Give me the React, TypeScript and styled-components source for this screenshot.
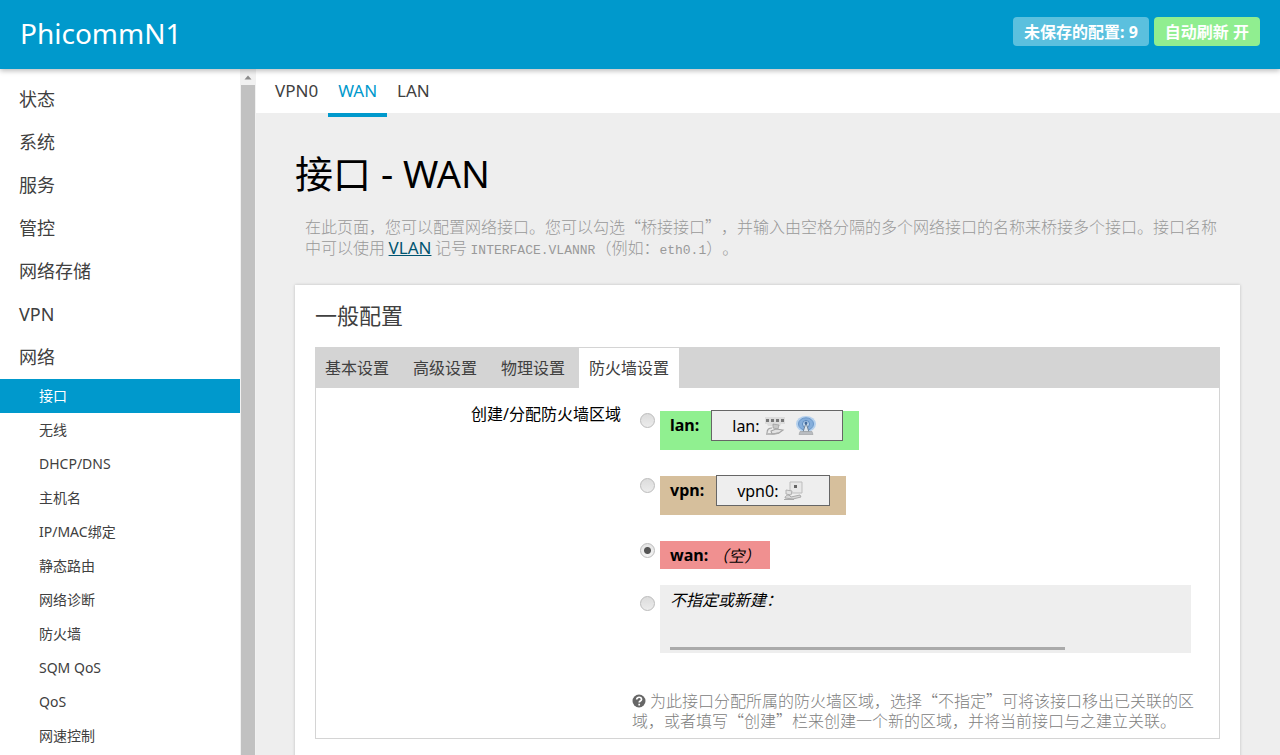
import React, { useState } from "react";
import styled, { createGlobalStyle, css } from "styled-components";

const latin = '"Noto Sans", "Noto Sans CJK SC", sans-serif';
const han = '"Noto Sans CJK SC", "Noto Sans", sans-serif';

const GlobalStyle = createGlobalStyle`
  *, *::before, *::after { box-sizing: border-box; }
  html, body, #root { height: 100%; }
  body {
    margin: 0;
    background: #eee;
    color: #404040;
    font-family: ${latin};
    font-size: 16px;
    line-height: 24px;
    text-spacing-trim: space-all;
  }
  ul { list-style: none; margin: 0; padding: 0; }
  a { text-decoration: none; }
`;

const Shell = styled.div`
  display: flex;
  flex-direction: column;
  height: 100vh;
`;

const Header = styled.header`
  position: relative;
  z-index: 2;
  flex: none;
  display: flex;
  align-items: flex-start;
  justify-content: space-between;
  height: 69px;
  padding: 17px 20px 0;
  background: #0099cc;
  box-shadow: 0 2px 5px rgba(0, 0, 0, 0.26);
`;

const Brand = styled.a`
  color: #fff;
  font-size: 28px;
  line-height: 32px;
`;

const Badges = styled.div`
  display: flex;
  gap: 5px;
`;

const badge = css`
  height: 29px;
  padding: 0 11px;
  border: 0;
  border-radius: 4px;
  color: #fff;
  font: bold 16px/31px ${latin};
  white-space: nowrap;
`;

const ChangesLink = styled.a`
  ${badge}
  background: #5bc0de;
`;

const RefreshButton = styled.button`
  ${badge}
  background: #90ee90;
  cursor: pointer;
`;

const Body = styled.div`
  flex: 1;
  min-height: 0;
  display: flex;
`;

const Sidebar = styled.nav`
  flex: none;
  width: 240px;
  padding-top: 9px;
  background: #fff;
  overflow-y: auto;
  scrollbar-width: none;
`;

const MenuLink = styled.a`
  display: block;
  padding: 0 19px;
  color: #404040;
  font-size: 18px;
  line-height: 43px;
`;

const SubLink = styled.a<{ $active?: boolean }>`
  display: block;
  padding: 0 39px;
  color: ${(p) => (p.$active ? "#fff" : "#404040")};
  background: ${(p) => (p.$active ? "#0099cc" : "transparent")};
  font-size: 14px;
  line-height: 34px;
`;

const Rail = styled.div`
  flex: none;
  display: flex;
  flex-direction: column;
  width: 16px;
  padding: 0 1px;
  background: #f1f1f1;
`;

const RailArrow = styled.svg`
  flex: none;
  width: 14px;
  height: 16px;
`;

const RailThumb = styled.div`
  flex: 1;
  background: #c1c1c1;
`;

const Main = styled.main`
  flex: 1;
  min-width: 0;
  overflow-y: auto;
  scrollbar-width: none;
`;

const PageTabs = styled.ul`
  display: flex;
  height: 44px;
  padding-left: 9px;
  background: #fff;
`;

const PageTab = styled.a<{ $active?: boolean }>`
  display: block;
  height: 48px;
  padding: 0 10px;
  border-bottom: 4px solid ${(p) => (p.$active ? "#0099cc" : "transparent")};
  color: ${(p) => (p.$active ? "#0099cc" : "#404040")};
  font-size: 17px;
  line-height: 44px;
`;

const Content = styled.div`
  padding: 34px 40px 40px 39px;
`;

const Title = styled.h2`
  margin: 0;
  color: #000;
  font-size: 38px;
  font-weight: 400;
  line-height: 52px;
`;

const Intro = styled.p`
  margin: 17px 0 27px;
  padding: 0 10px;
  color: #999;
  font-family: ${han};
  font-weight: 300;
  line-height: 21px;
`;

const TermLink = styled.a`
  color: #005470;
  font-family: ${latin};
  font-size: 17px;
  font-weight: 400;
  line-height: 20px;
  text-decoration: underline;
`;

const Code = styled.code`
  font: 13px/1 "Liberation Mono", monospace;
`;

const Card = styled.section`
  padding: 18px 20px 20px;
  background: #fff;
  box-shadow: 0 0 3px rgba(0, 0, 0, 0.2);
`;

const CardTitle = styled.h3`
  margin: 0 0 20px;
  font-size: 22px;
  font-weight: 400;
  line-height: 24px;
`;

const SettingTabs = styled.div`
  display: flex;
  gap: 4px;
  height: 41px;
  padding-top: 1px;
  background: #d4d4d4;
`;

const SettingTab = styled.button<{ $active?: boolean }>`
  padding: 0 10px;
  border: 0;
  background: ${(p) => (p.$active ? "#fff" : "transparent")};
  color: #404040;
  font: 16px/40px ${latin};
  cursor: pointer;
`;

const Panel = styled.form`
  display: grid;
  grid-template-columns: minmax(160px, 305px) 1fr;
  column-gap: 11px;
  padding: 14px 19px 8px 0;
  border: 1px solid #d4d4d4;
  border-top: 0;
`;

const FieldName = styled.div`
  color: #000;
  text-align: right;
`;

const ZoneList = styled.ul`
  padding: 9px 9px 0 8px;
  color: #000;
`;

const ZoneRow = styled.li<{ $roomy?: boolean }>`
  display: flex;
  align-items: flex-start;
  gap: 5px;
  margin-bottom: ${(p) => (p.$roomy ? 26 : 16)}px;
  &:last-child { margin-bottom: 0; }
`;

const Radio = styled.input<{ $low?: boolean }>`
  appearance: none;
  flex: none;
  width: 15px;
  height: 15px;
  margin: ${(p) => (p.$low ? 11 : 2)}px 0 0;
  border: 1px solid #bbb;
  border-radius: 50%;
  background: linear-gradient(#dcdcdc, #ececec);
  &:checked {
    background: radial-gradient(circle, #555 0 3px, transparent 4px), linear-gradient(#e4e4e4, #f4f4f4);
  }
`;

const Zone = styled.label<{ $color: string; $tall?: boolean }>`
  display: flex;
  align-items: flex-start;
  height: ${(p) => (p.$tall ? 39 : 28)}px;
  padding: 0 ${(p) => (p.$tall ? 16 : 10)}px 0 10px;
  background: ${(p) => p.$color};
  line-height: 28px;
`;

const Empty = styled.em`
  margin-left: 4px;
  font-family: ${han};
`;

const Network = styled.span`
  display: flex;
  align-items: center;
  height: 31px;
  margin: -1px 0 0 12px;
  padding: 0 26px 0 20px;
  border: 1px solid #666;
  background: #eee;
`;

const Icon = styled.svg`
  width: 20px;
  height: 20px;
  margin-left: 5px;
  & + & { margin-left: 11px; }
`;

const NewZone = styled.div`
  flex: 1;
  height: 68px;
  padding: 3px 10px;
  background: #eee;
`;

const NewZoneLabel = styled.label`
  display: block;
  font-style: italic;
`;

const NewZoneInput = styled.input`
  display: block;
  width: 100%;
  max-width: 395px;
  height: 38px;
  padding: 0;
  border: 0;
  border-bottom: 3px solid #aaa;
  background: transparent;
  font: 16px/24px ${latin};
  outline: none;
`;

const Help = styled.p`
  margin: 37px 0 0;
  color: #808080;
  font-family: ${han};
  font-weight: 300;
  line-height: 20px;
`;

const HelpIcon = styled.svg`
  width: 14px;
  height: 14px;
  margin-right: 4px;
  vertical-align: -1px;
`;

const SwitchIcon = () => (
  <Icon viewBox="0 0 20 20" aria-hidden="true">
    <path d="M0 1h20v7h-4l-1 2H3l-1-2H0z" fill="#dcdcdc" />
    <path d="M1 3h3v3H1zM6 3h3v3H6zM11 3h3v3h-3zM16 3h3v3h-3z" fill="#777" />
    <path d="M8 8l6 1-1 4-5-1z" fill="#c8c8c8" stroke="#999" strokeWidth="0.7" />
    <path d="M2 17c0-4 2-5 5-5M6 15l5-2 7 1-4 3-7 1z" fill="#e2e2e2" stroke="#a3a3a3" strokeWidth="1.1" />
    <path d="M1 18h8l5-1" fill="none" stroke="#aaa" strokeWidth="1.4" />
  </Icon>
);

const WifiIcon = () => (
  <Icon viewBox="0 0 20 20" aria-hidden="true">
    <ellipse cx="10" cy="8" rx="10" ry="8" fill="#b4d0ed" />
    <ellipse cx="10" cy="8" rx="7.500" ry="6.200" fill="#85aedb" stroke="#6b98ca" />
    <circle cx="10" cy="8" r="3.500" fill="#c5dcf3" stroke="#5785bb" />
    <path d="M10 7l-3 9h6z" fill="#dde5ec" stroke="#6c7f94" strokeWidth="0.9" />
    <circle cx="10" cy="7" r="1.500" fill="#436b9d" />
    <path d="M4 15.500h12l1 3H3z" fill="#b9bcc0" stroke="#9b9da0" strokeWidth="0.6" />
  </Icon>
);

const TunnelIcon = () => (
  <Icon viewBox="0 0 20 20" aria-hidden="true">
    <path d="M7 1h12v11H7z" fill="#e8e8e8" stroke="#bdbdbd" />
    <path d="M11 4h3v3h-3z" fill="#666" />
    <path d="M3 9l6 1-1 4-5-1z" fill="#e2e2e2" stroke="#aaa" strokeWidth="0.9" />
    <path d="M2 17c0-2 2-3 4-3l2 2 9-2 1 2-8 2z" fill="#d8d8d8" stroke="#aaa" />
    <path d="M1 18.500h10" stroke="#aaa" />
  </Icon>
);

const menu = ["状态", "系统", "服务", "管控", "网络存储", "VPN", "网络"];
const submenu = [
  "接口", "无线", "DHCP/DNS", "主机名", "IP/MAC绑定", "静态路由",
  "网络诊断", "防火墙", "SQM QoS", "QoS", "网速控制",
];
const settings = ["基本设置", "高级设置", "物理设置", "防火墙设置"];

export default function App() {
  const [zone, setZone] = useState("wan");
  const [tab, setTab] = useState("防火墙设置");

  const radio = (value: string) => ({
    type: "radio",
    name: "zone",
    id: `zone-${value}`,
    checked: zone === value,
    onChange: () => setZone(value),
  });

  return (
    <Shell lang="zh-CN">
      <GlobalStyle />
      <Header>
        <Brand href="#">PhicommN1</Brand>
        <Badges>
          <ChangesLink href="#changes">未保存的配置: 9</ChangesLink>
          <RefreshButton type="button">自动刷新 开</RefreshButton>
        </Badges>
      </Header>
      <Body>
        <Sidebar>
          <ul>
            {menu.map((name) => (
              <li key={name}>
                <MenuLink href="#">{name}</MenuLink>
                {name === "网络" && (
                  <ul>
                    {submenu.map((sub) => (
                      <li key={sub}>
                        <SubLink href="#" $active={sub === "接口"}>{sub}</SubLink>
                      </li>
                    ))}
                  </ul>
                )}
              </li>
            ))}
          </ul>
        </Sidebar>
        <Rail aria-hidden="true">
          <RailArrow viewBox="0 0 14 16">
            <path d="M3.500 10.500L7 6.500l3.500 4z" fill="#8a8a8a" />
          </RailArrow>
          <RailThumb />
        </Rail>
        <Main>
          <PageTabs>
            {["VPN0", "WAN", "LAN"].map((name) => (
              <li key={name}>
                <PageTab href="#" $active={name === "WAN"}>{name}</PageTab>
              </li>
            ))}
          </PageTabs>
          <Content>
            <Title>接口 - WAN</Title>
            <Intro>
              在此页面，您可以配置网络接口。您可以勾选“桥接接口”，并输入由空格分隔的多个网络接口的名称来桥接多个接口。接口名称中可以使用{" "}
              <TermLink href="#vlan">VLAN</TermLink> 记号 <Code>INTERFACE.VLANNR</Code>（例如：<Code>eth0.1</Code>）。
            </Intro>
            <Card>
              <CardTitle>一般配置</CardTitle>
              <SettingTabs role="tablist">
                {settings.map((name) => (
                  <SettingTab
                    key={name}
                    type="button"
                    role="tab"
                    aria-selected={tab === name}
                    $active={tab === name}
                    onClick={() => setTab(name)}
                  >
                    {name}
                  </SettingTab>
                ))}
              </SettingTabs>
              <Panel>
                <FieldName id="zone-name">创建/分配防火墙区域</FieldName>
                <div>
                  <ZoneList role="radiogroup" aria-labelledby="zone-name">
                    <ZoneRow $roomy>
                      <Radio {...radio("lan")} />
                      <Zone htmlFor="zone-lan" $color="#90f090" $tall>
                        <strong>lan:</strong>
                        <Network>lan:<SwitchIcon /><WifiIcon /></Network>
                      </Zone>
                    </ZoneRow>
                    <ZoneRow $roomy>
                      <Radio {...radio("vpn")} />
                      <Zone htmlFor="zone-vpn" $color="#d6bf9c" $tall>
                        <strong>vpn:</strong>
                        <Network>vpn0:<TunnelIcon /></Network>
                      </Zone>
                    </ZoneRow>
                    <ZoneRow>
                      <Radio {...radio("wan")} />
                      <Zone htmlFor="zone-wan" $color="#f09090">
                        <strong>wan:</strong>
                        <Empty>（空）</Empty>
                      </Zone>
                    </ZoneRow>
                    <ZoneRow>
                      <Radio {...radio("new")} $low aria-label="不指定或新建" />
                      <NewZone>
                        <NewZoneLabel htmlFor="zone-new-name">不指定或新建：</NewZoneLabel>
                        <NewZoneInput id="zone-new-name" type="text" />
                      </NewZone>
                    </ZoneRow>
                  </ZoneList>
                  <Help>
                    <HelpIcon viewBox="0 0 14 14" aria-hidden="true">
                      <circle cx="7" cy="7" r="6.500" fill="#666" />
                      <path d="M4.700 5.600c0-3.200 4.800-3 4.800-.2 0 1.700-2.300 1.600-2.300 3.100M7.200 9.700v1.700" fill="none" stroke="#fff" strokeWidth="1.700" />
                    </HelpIcon>
                    为此接口分配所属的防火墙区域，选择“不指定”可将该接口移出已关联的区域，或者填写“创建”栏来创建一个新的区域，并将当前接口与之建立关联。
                  </Help>
                </div>
              </Panel>
            </Card>
          </Content>
        </Main>
      </Body>
    </Shell>
  );
}
